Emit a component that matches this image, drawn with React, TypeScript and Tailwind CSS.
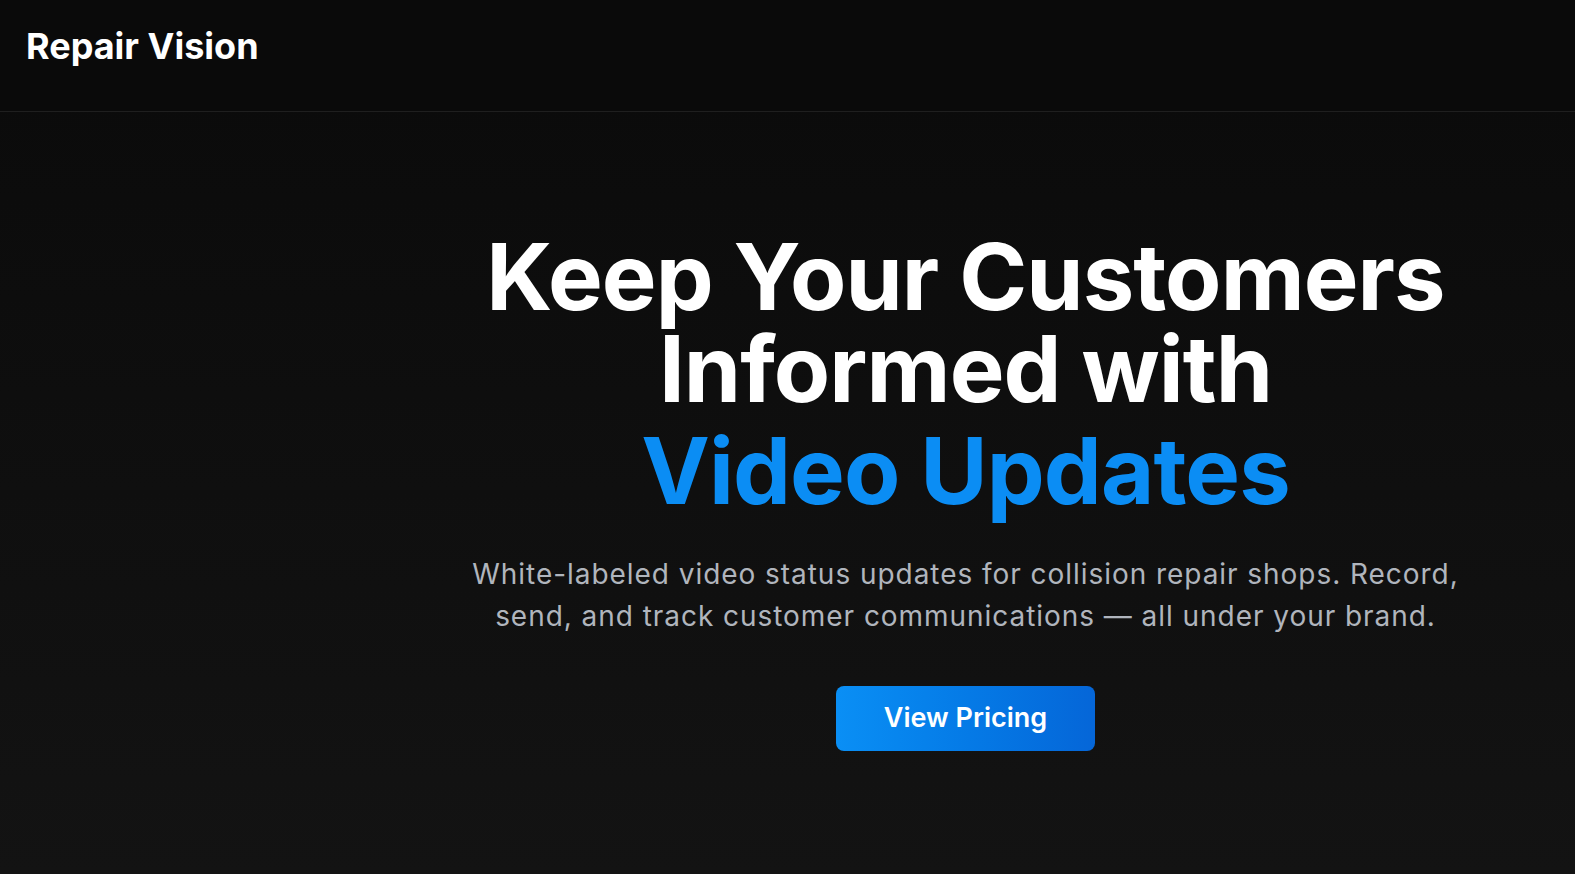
export default function App() {
  return (
    <div
      className="flex min-h-screen flex-col bg-gradient-to-b from-[#0a0a0a] to-[#131313] text-white"
      style={{ fontFamily: "Inter, 'Noto Sans', sans-serif" }}
    >
      <header className="flex h-[112px] items-start border-b border-[#1f1f1f] bg-[#0a0a0a] px-[26px] pt-[24px]">
        <span className="text-[36px] font-bold leading-[44px]">Repair Vision</span>
      </header>

      <main className="flex flex-1">
        <aside className="w-[356px] shrink-0" />
        <section className="flex flex-1 flex-col items-center pt-[119px] text-center">
          <h1 className="text-[92px] font-bold leading-[92px] tracking-[-0.01em]">
            Keep Your Customers
            <br />
            Informed with
            <span className="mt-[10px] block text-[#0b8df4]">Video Updates</span>
          </h1>
          <p className="mt-[36px] max-w-[1010px] text-[28px] leading-[42px] tracking-[0.034em] text-[#b0b5bd]">
            White-labeled video status updates for collision repair shops. Record, send, and track customer
            communications — all under your brand.
          </p>
          <button className="mt-[49px] h-[65px] w-[259px] rounded-lg bg-gradient-to-r from-[#0a8ff5] to-[#0566d8] text-[27px] font-semibold text-white">
            View Pricing
          </button>
        </section>
      </main>
    </div>
  );
}
